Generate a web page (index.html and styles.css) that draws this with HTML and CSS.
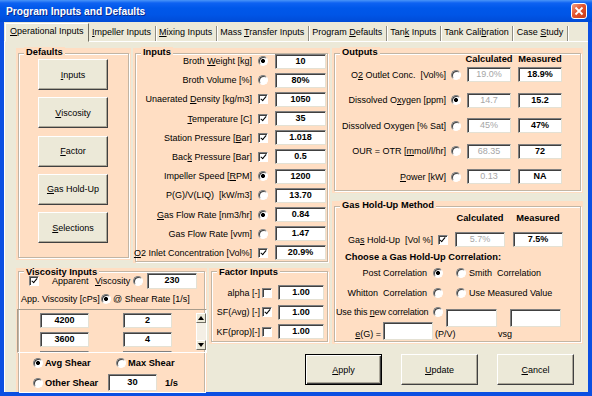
FILE: index.html
```html
<!DOCTYPE html>
<html lang="en">
<head>
    <meta charset="UTF-8">
    <title>Program Inputs and Defaults</title>
    <link rel="stylesheet" href="styles.css">
</head>
<body>
    <div class="window">
        <div class="titlebar">
            <span class="title">Program Inputs and Defaults</span>
            <span class="close">
                <svg width="10" height="10" viewBox="0 0 10 10"><path d="M1.5 1.5l7 7M8.5 1.5l-7 7" stroke="#fff" stroke-width="1.8" fill="none"/></svg>
            </span>
        </div>

        <div class="client">
            <div class="tabs">
                <div class="tab active"><u>O</u>perational Inputs</div>
                <div class="tab"><u>I</u>mpeller Inputs</div>
                <div class="tab"><u>M</u>ixing Inputs</div>
                <div class="tab">Mass <u>T</u>ransfer Inputs</div>
                <div class="tab">Program <u>D</u>efaults</div>
                <div class="tab">Tan<u>k</u> Inputs</div>
                <div class="tab">Tank Cali<u>b</u>ration</div>
                <div class="tab">Case <u>S</u>tudy</div>
            </div>

            <div class="page">
                <div class="layout">

                    <!-- Defaults -->
                    <div class="panel p-defaults">
                        <div class="group">
                            <span class="group-title">Defaults</span>
                            <div class="default-buttons">
                                <div class="btn"><span><u>I</u>nputs</span></div>
                                <div class="btn"><span><u>V</u>iscosity</span></div>
                                <div class="btn"><span><u>F</u>actor</span></div>
                                <div class="btn"><span><u>G</u>as Hold-Up</span></div>
                                <div class="btn"><span><u>S</u>elections</span></div>
                            </div>
                        </div>
                    </div>

                    <!-- Inputs -->
                    <div class="panel p-inputs">
                        <div class="group">
                            <span class="group-title">Inputs</span>
                            <div class="input-rows">
                                <span class="lbl">Broth <u>W</u>eight [kg]</span><span class="rad on"></span><span class="tb">10</span>
                                <span class="lbl">Broth Volume [%]</span><span class="rad"></span><span class="tb">80%</span>
                                <span class="lbl">Unaerated <u>D</u>ensity [kg/m3]</span><span class="chk on"></span><span class="tb">1050</span>
                                <span class="lbl"><u>T</u>emperature [C]</span><span class="chk on"></span><span class="tb">35</span>
                                <span class="lbl">Station Pressure [<u>B</u>ar]</span><span class="chk on"></span><span class="tb">1.018</span>
                                <span class="lbl">Bac<u>k</u> Pressure [Bar]</span><span class="chk on"></span><span class="tb">0.5</span>
                                <span class="lbl">Impeller Speed [<u>R</u>PM]</span><span class="rad on"></span><span class="tb">1200</span>
                                <span class="lbl">P(G)/V(LIQ)&nbsp; [kW/m3]</span><span class="rad"></span><span class="tb">13.70</span>
                                <span class="lbl"><u>G</u>as Flow Rate [nm3/hr]</span><span class="rad on"></span><span class="tb">0.84</span>
                                <span class="lbl">Gas Flow Rate [vvm]</span><span class="rad"></span><span class="tb">1.47</span>
                                <span class="lbl"><u>O</u>2 Inlet Concentration [Vol%]</span><span class="chk on"></span><span class="tb">20.9%</span>
                            </div>
                        </div>
                    </div>

                    <!-- Outputs -->
                    <div class="panel p-outputs">
                        <div class="group">
                            <span class="group-title">Outputs</span>
                            <div class="out-grid out-head">
                                <b class="col-calc">Calculated</b>
                                <b class="col-meas">Measured</b>
                            </div>
                            <div class="out-grid out-rows">
                                <span class="lbl">O<u>2</u> Outlet Conc.&nbsp; [Vol%]</span><span class="rad"></span><span class="tb dis col-calc">19.0%</span><span class="tb col-meas">18.9%</span>
                                <span class="lbl">Dissolved O<u>x</u>ygen [ppm]</span><span class="rad on"></span><span class="tb dis col-calc">14.7</span><span class="tb col-meas">15.2</span>
                                <span class="lbl">Dissolved Oxygen [% Sat]</span><span class="rad"></span><span class="tb dis col-calc">45%</span><span class="tb col-meas">47%</span>
                                <span class="lbl">OUR = OTR [<u>m</u>mol/l/hr]</span><span class="rad"></span><span class="tb dis col-calc">68.35</span><span class="tb col-meas">72</span>
                                <span class="lbl"><u>P</u>ower [kW]</span><span class="rad"></span><span class="tb dis col-calc">0.13</span><span class="tb col-meas">NA</span>
                            </div>
                        </div>
                    </div>

                    <!-- Gas Hold-Up Method -->
                    <div class="panel p-gas">
                        <div class="group">
                            <span class="group-title">Gas Hold-Up Method</span>
                            <div class="gas-grid gas-head">
                                <b class="col-calc">Calculated</b>
                                <b class="col-meas">Measured</b>
                            </div>
                            <div class="gas-grid gas-row">
                                <span class="lbl">Ga<u>s</u> Hold-Up&nbsp; [Vol %]</span><span class="chk on"></span><span class="tb dis col-calc">5.7%</span><span class="tb col-meas">7.5%</span>
                            </div>
                            <b class="choose">Choose a Gas Hold-Up Correlation:</b>
                            <div class="corr-rows">
                                <div class="corr-row">
                                    <span class="corr-lbl">Post Correlation</span><span class="rad on"></span>
                                    <span class="rad second"></span><span class="corr-text">Smith&nbsp; Correlation</span>
                                </div>
                                <div class="corr-row">
                                    <span class="corr-lbl">Whitton&nbsp; Correlation</span><span class="rad"></span>
                                    <span class="rad second"></span><span class="corr-text">Use Measured Value</span>
                                </div>
                                <div class="corr-row">
                                    <span class="corr-lbl tight">Use this <u>n</u>ew correlation</span><span class="rad"></span>
                                    <span class="tb tb-new"></span><span class="tb tb-new second-box"></span>
                                </div>
                            </div>
                            <div class="eg-row">
                                <span class="eg-lbl"><u>e</u>(G) =</span>
                                <span class="tb tb-eg"></span>
                                <span class="eg-pv">(P/V)</span>
                                <span>vsg</span>
                            </div>
                        </div>
                    </div>

                    <!-- Viscosity Inputs -->
                    <div class="panel p-visc">
                        <div class="group open-bottom">
                            <span class="group-title low">Viscosity Inputs</span>
                            <div class="visc-row1">
                                <span class="chk on"></span>
                                <span class="w-apparent">Apparent</span>
                                <span class="w-visc"><u>V</u>iscosity</span>
                                <span class="rad"></span>
                                <span class="tb tb-visc">230</span>
                            </div>
                            <div class="visc-row2">
                                <span class="w-app">App. Viscosity [cPs]</span>
                                <span class="rad on"></span>
                                <span class="shear-rate">@ Shear Rate [1/s]</span>
                            </div>
                            <div class="scroll-frame">
                                <div class="shear-grid">
                                    <span class="tb">4200</span><span class="tb">2</span>
                                    <span class="tb">3600</span><span class="tb">4</span>
                                    <span class="tb"></span><span class="tb"></span>
                                </div>
                                <div class="vscroll">
                                    <span class="sb-btn"><svg width="6" height="4" viewBox="0 0 6 4"><path d="M0 4h6L3 0z" fill="#000"/></svg></span>
                                    <span class="sb-track"></span>
                                    <span class="sb-btn"><svg width="6" height="4" viewBox="0 0 6 4"><path d="M0 0h6L3 4z" fill="#000"/></svg></span>
                                </div>
                            </div>
                            <div class="shear-row">
                                <span class="rad on"></span><b class="w-avg">Avg Shear</b>
                                <span class="rad"></span><b class="shear-text">Max Shear</b>
                            </div>
                            <div class="shear-row other">
                                <span class="rad"></span><b class="w-other">Other Shear</b>
                                <span class="tb tb-other">30</span><b class="unit">1/s</b>
                            </div>
                        </div>
                    </div>

                    <!-- Factor Inputs -->
                    <div class="panel p-factor">
                        <div class="group">
                            <span class="group-title low">Factor Inputs</span>
                            <div class="factor-rows">
                                <span class="lbl">alpha [-]</span><span class="chk"></span><span class="tb col-box">1.00</span>
                                <span class="lbl">SF(Avg) [-]</span><span class="chk on"></span><span class="tb col-box">1.00</span>
                                <span class="lbl">KF(prop)[-]</span><span class="chk"></span><span class="tb col-box">1.00</span>
                            </div>
                        </div>
                    </div>

                    <div class="actions">
                        <div class="btn wide default"><span><u>A</u>pply</span></div>
                        <div class="btn wide"><span><u>U</u>pdate</span></div>
                        <div class="btn wide"><span><u>C</u>ancel</span></div>
                    </div>

                </div>
            </div>
        </div>
    </div>
</body>
</html>
```

FILE: styles.css
```css
* {
    margin: 0;
    padding: 0;
    box-sizing: border-box;
}

body {
    font-family: "Liberation Sans", Arial, sans-serif;
    font-size: 9px;
    color: #000;
    background: #fff;
}

u {
    text-decoration: underline;
    text-underline-offset: 1px;
}

.window {
    width: 592px;
    height: 396px;
    background: #0b4fe2;
    display: flex;
    flex-direction: column;
    overflow: hidden;
}

/* title bar */
.titlebar {
    height: 22px;
    flex-shrink: 0;
    display: flex;
    align-items: center;
    justify-content: space-between;
    padding: 0 5px 0 6px;
    background: linear-gradient(#4a95f8 0, #0e62f2 3px, #0058ea 8px, #0055e6 15px, #004bd6 22px);
}

.title {
    color: #fff;
    font-weight: bold;
    font-size: 10.2px;
    text-shadow: 1px 1px 0 #0b2a8a;
}

.close {
    width: 16px;
    height: 16px;
    border: 1px solid #fff;
    border-radius: 3px;
    background: linear-gradient(135deg, #f3a083 0%, #e2542f 45%, #c83c18 100%);
    display: flex;
    align-items: center;
    justify-content: center;
}

.client {
    flex: 1;
    margin: 0 4px 4px;
    background: #ece9d8;
    display: flex;
    flex-direction: column;
}

/* tabs */
.tabs {
    height: 19px;
    flex-shrink: 0;
    display: flex;
    align-items: flex-end;
    padding-left: 1px;
}

.tab {
    height: 15px;
    line-height: 13px;
    padding: 0 3.5px;
    white-space: nowrap;
    border-right: 1px solid #8f8d83;
    box-shadow: 1px 0 0 #fff;
}

.tab.active {
    height: 19px;
    line-height: 15px;
    margin-bottom: -1px;
    padding: 0 4px;
    background: #ece9d8;
    border: 1px solid;
    border-color: #fff #716f64 transparent #fff;
    box-shadow: none;
    position: relative;
    z-index: 1;
}

.page {
    flex: 1;
    border-top: 1px solid #fff;
    border-left: 1px solid #fff;
    padding: 6px 0 0 11px;
}

.layout {
    display: grid;
    grid-template-columns: 115px 2px 74px 2px 121px 2px 251px;
    grid-template-rows: 145px 8px 62px 5px 76px 48px;
}

/* group boxes */
.panel {
    background: #ffdec3;
    padding: 5px 2px 2px;
    display: flex;
    flex-direction: column;
}

.group {
    flex: 1;
    position: relative;
    border: 1px solid #c2b5a4;
    box-shadow: inset 1px 1px 0 #fff, 1px 1px 0 #fff;
    padding: 1px;
}

.group.open-bottom {
    border-bottom: none;
}

.group-title {
    position: absolute;
    top: -7px;
    left: 5px;
    padding: 0 2px;
    line-height: 10px;
    font-weight: bold;
    font-size: 9.3px;
    background: #ffdec3;
    white-space: nowrap;
}

.group-title.low {
    top: -5px;
    background: linear-gradient(transparent 2px, #ffdec3 2px);
}

.p-defaults { grid-column: 1; grid-row: 1 / 4; margin-bottom: 3px; }
.p-inputs { grid-column: 3 / 6; grid-row: 1 / 4; }
.p-outputs { grid-column: 7; grid-row: 1; }
.p-gas { grid-column: 7; grid-row: 3 / 6; }
.p-visc { grid-column: 1 / 4; grid-row: 5 / 7; padding-top: 3px; padding-bottom: 0; }
.p-factor { grid-column: 5; grid-row: 5; padding-top: 3px; }

.lbl {
    white-space: nowrap;
    text-align: right;
    justify-self: end;
    padding-right: 1px;
}

/* controls */
.tb {
    display: block;
    height: 15px;
    background: #fff;
    border: 1px solid;
    border-color: #808080 #e4e1d4 #e4e1d4 #808080;
    box-shadow: inset 1px 1px 0 #404040;
    font-weight: bold;
    text-align: center;
    line-height: 13px;
    white-space: nowrap;
}

.tb.dis {
    font-weight: normal;
    color: #a6a6a6;
}

.chk,
.rad {
    display: block;
    width: 10px;
    height: 10px;
    background: #fff;
    border: 1px solid;
    border-color: #808080 #fff #fff #808080;
    box-shadow: inset 1px 1px 0 #404040;
    position: relative;
}

.rad {
    border-radius: 50%;
}

.rad.on {
    background: radial-gradient(circle, #000 0 1.7px, #fff 2.3px);
}

.chk.on::after {
    content: '';
    position: absolute;
    left: 2.5px;
    top: 0;
    width: 2px;
    height: 5px;
    border: solid #000;
    border-width: 0 1.6px 1.6px 0;
    transform: rotate(40deg);
}

.btn {
    width: 70px;
    height: 31px;
    background: #ece9d8;
    border: 1px solid;
    border-color: #fff #404040 #404040 #fff;
    box-shadow: inset -1px -1px 0 #aca899;
    display: flex;
    align-items: center;
    justify-content: center;
    white-space: nowrap;
}

.btn.wide {
    width: 77px;
}

.btn.default {
    border-color: #000;
    box-shadow: inset 1px 1px 0 #fff, inset -1px -1px 0 #404040, inset -2px -2px 0 #aca899;
}

/* defaults */
.default-buttons {
    display: flex;
    flex-direction: column;
    gap: 7.3px;
    padding: 4px 0 0 18px;
}

/* inputs */
.input-rows {
    display: grid;
    grid-template-columns: 116px 22px 51px;
    grid-auto-rows: 15px;
    row-gap: 4.2px;
    align-items: center;
    margin-top: -1.5px;
}

.input-rows .rad,
.input-rows .chk {
    margin-left: 5px;
}

/* outputs */
.out-grid {
    display: grid;
    grid-template-columns: 112px 16px 3px 44px 7px 44px;
    align-items: center;
}

.out-head {
    height: 10px;
    line-height: 10px;
    margin-top: -1px;
    font-size: 9.3px;
}

.col-calc { grid-column: 4; justify-self: center; white-space: nowrap; }
.col-meas { grid-column: 6; justify-self: center; white-space: nowrap; }

.out-grid .tb { width: 44px; }

.out-rows {
    margin-top: 3px;
    grid-auto-rows: 15px;
    row-gap: 10.5px;
}

.out-rows .lbl { padding-right: 2px; }
.out-rows .rad { justify-self: center; }

/* gas hold-up */
.gas-grid {
    display: grid;
    grid-template-columns: 99px 15px 5px 50px 8px 50px;
    align-items: center;
}

.gas-grid .tb { width: 50px; }

.gas-head {
    height: 10px;
    line-height: 10px;
    margin-top: 5px;
    font-size: 9.3px;
}

.gas-row {
    margin-top: 9px;
    height: 15px;
}

.gas-row .lbl { padding-right: 2px; }
.gas-row .chk { justify-self: center; }

.choose {
    display: block;
    margin: 5px 0 0 9px;
    line-height: 10px;
    font-size: 9.3px;
}

.corr-rows {
    display: grid;
    grid-auto-rows: 14px;
    row-gap: 5.5px;
    margin-top: 4px;
}

.corr-row {
    display: flex;
    align-items: center;
    height: 14px;
}

.corr-lbl {
    width: 95px;
    text-align: right;
    padding-right: 4px;
    white-space: nowrap;
}

.corr-lbl.tight {
    letter-spacing: -0.15px;
}

.corr-row .rad {
    margin: 0 2px;
}

.corr-row .rad.second {
    margin-left: 11px;
    margin-right: 0;
}

.corr-text {
    margin-left: 3px;
    white-space: nowrap;
}

.tb-new {
    width: 51px;
    height: 18px;
    align-self: flex-start;
    margin: 4px 0 0 1px;
}

.tb-new.second-box {
    margin-left: 13px;
}

.eg-row {
    display: flex;
    align-items: flex-end;
    height: 18px;
    margin-top: 3px;
    line-height: 12px;
}

.eg-lbl {
    width: 47px;
    text-align: right;
    padding-right: 2px;
}

.tb-eg {
    width: 50px;
    height: 18px;
}

.eg-pv {
    width: 65px;
    padding-left: 2px;
}

/* viscosity */
.visc-row1 {
    display: flex;
    align-items: center;
    height: 16px;
}

.visc-row1 .chk { margin-left: 9px; }
.w-apparent { margin-left: 13px; width: 43px; }
.w-visc { width: 38px; }

.tb-visc {
    width: 50px;
    height: 16px;
    margin-left: 4px;
}

.visc-row2 {
    display: flex;
    align-items: center;
    height: 12px;
    margin-top: 4px;
    white-space: nowrap;
}

.w-app { width: 81px; padding-left: 1px; }
.shear-rate { margin-left: 2px; }

.scroll-frame {
    display: flex;
    height: 44px;
    margin: 4px -4px 0 -3px;
    border: 1px solid;
    border-color: #a89c8c #fff #fff #a89c8c;
    overflow: hidden;
}

.shear-grid {
    flex: 1;
    display: grid;
    grid-template-columns: 49px 49px;
    grid-auto-rows: 15px;
    column-gap: 34px;
    row-gap: 4px;
    padding: 3px 0 0 22px;
}

.vscroll {
    width: 10px;
    display: flex;
    flex-direction: column;
    padding: 3px 0 2px;
}

.sb-btn {
    height: 10px;
    background: #ece9d8;
    border: 1px solid;
    border-color: #fff #716f64 #716f64 #fff;
    display: flex;
    align-items: center;
    justify-content: center;
}

.sb-track {
    flex: 1;
    background: #f4efe5;
    border-left: 1px solid #fff;
}

.shear-row {
    display: flex;
    align-items: center;
    height: 12px;
    margin-top: 4px;
    font-size: 9.3px;
    white-space: nowrap;
}

.shear-row .rad:first-child { margin-left: 13px; }
.w-avg { margin-left: 2px; width: 71px; }
.shear-text { margin-left: 2px; }

.shear-row.other {
    height: 17px;
    margin-top: 5px;
}

.w-other { margin-left: 2px; width: 63px; }

.tb-other {
    width: 49px;
    height: 17px;
    line-height: 15px;
}

.unit { margin-left: 8px; }

/* factor */
.factor-rows {
    display: grid;
    grid-template-columns: 49px 10px 6px 46px;
    grid-auto-rows: 15px;
    row-gap: 4.5px;
    align-items: center;
    margin-top: 12px;
}

.factor-rows .lbl { padding-right: 2px; }
.col-box { grid-column: 4; }

/* dialog buttons */
.actions {
    grid-column: 5 / 8;
    grid-row: 6;
    display: flex;
    gap: 19px;
    padding: 10px 0 0 96px;
}
```
